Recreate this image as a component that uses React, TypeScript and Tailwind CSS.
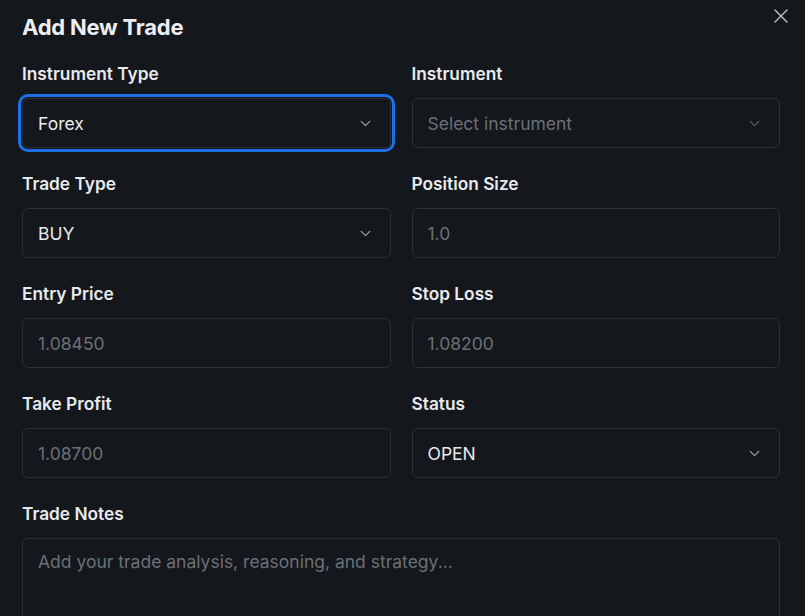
import { ChevronDown, X } from "lucide-react";

type Field = {
  label: string;
  value: string;
  placeholder?: boolean;
  select?: boolean;
  focused?: boolean;
};

const fields: Field[] = [
  { label: "Instrument Type", value: "Forex", select: true, focused: true },
  { label: "Instrument", value: "Select instrument", select: true, placeholder: true },
  { label: "Trade Type", value: "BUY", select: true },
  { label: "Position Size", value: "1.0", placeholder: true },
  { label: "Entry Price", value: "1.08450", placeholder: true },
  { label: "Stop Loss", value: "1.08200", placeholder: true },
  { label: "Take Profit", value: "1.08700", placeholder: true },
  { label: "Status", value: "OPEN", select: true },
];

function FormField({ label, value, placeholder, select, focused }: Field) {
  return (
    <div>
      <label className="block pt-[1px] text-[17.3px] leading-6 font-semibold text-[#e8eaed] mb-[12px]">
        {label}
      </label>
      <div
        className={
          "h-[50px] flex items-center justify-between pl-[15px] pr-4 rounded-md border border-[#2a3039] bg-[#14171c] " +
          (focused ? "outline-[3px] outline-solid outline-[#1f70e6] outline-offset-[1px]" : "")
        }
      >
        <span className={"pt-[2px] text-[17.5px] " + (placeholder ? "text-[#6b7078]" : "text-[#e8eaed]")}>
          {value}
        </span>
        {select && (
          <ChevronDown
            size={17}
            strokeWidth={1.75}
            className={placeholder ? "text-[#5a6068]" : "text-[#9aa0a8]"}
          />
        )}
      </div>
    </div>
  );
}

export default function App() {
  return (
    <div
      className="relative w-[805px] h-[616px] overflow-hidden bg-[#14171c]"
      style={{ fontFamily: "Inter, 'Noto Sans', sans-serif" }}
    >
      <button className="absolute top-[4px] right-[12px] text-[#b8bcc2]">
        <X size={24} strokeWidth={1.5} />
      </button>

      <div className="pl-[22px] pr-[25px] pt-[11px]">
        <h2 className="text-[22px] leading-8 font-bold text-[#eceef1] tracking-[-0.01em]">
          Add New Trade
        </h2>

        <div className="grid grid-cols-2 gap-x-[21px] gap-y-[23px] mt-[18px]">
          {fields.map((f) => (
            <FormField key={f.label} {...f} />
          ))}

          <div className="col-span-2">
            <label className="block pt-[1px] text-[17.3px] leading-6 font-semibold text-[#e8eaed] mb-[12px]">
              Trade Notes
            </label>
            <div className="h-[120px] pl-[15px] pr-4 pt-[10px] rounded-md border border-[#2a3039] bg-[#14171c]">
              <span className="text-[17.5px] text-[#6b7078]">
                Add your trade analysis, reasoning, and strategy...
              </span>
            </div>
          </div>
        </div>
      </div>
    </div>
  );
}
